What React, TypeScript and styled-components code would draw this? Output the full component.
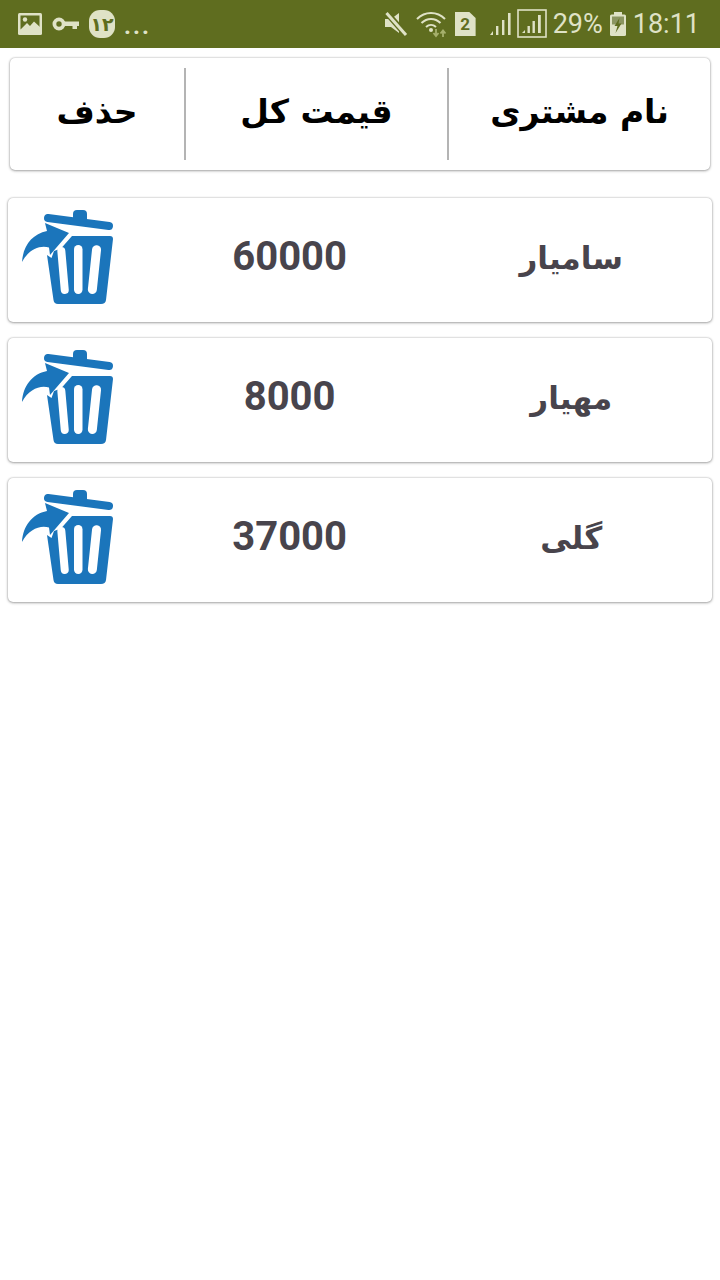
import styled, { createGlobalStyle } from "styled-components";

const GlobalStyle = createGlobalStyle`
  html, body {
    margin: 0;
    padding: 0;
    background: #fff;
  }
`;

type Order = {
  id: number;
  customer: string;
  total: string;
};

const orders: Array<Order> = [
  { id: 1, customer: "سامیار", total: "60000" },
  { id: 2, customer: "مهیار", total: "8000" },
  { id: 3, customer: "گلی", total: "37000" },
];

const StatusIconColor = "#dfe2c6";

const ImageIcon = () => (
  <svg width="26" height="24" viewBox="0 0 26 24">
    <rect x="1" y="1" width="24" height="22" rx="1.5" fill={StatusIconColor} />
    <rect x="3.5" y="3.5" width="19" height="14" fill="#5f6d1f" />
    <circle cx="8" cy="7.5" r="2.2" fill={StatusIconColor} />
    <path d="M3 18 L10 11 L13 14 L17 9.5 L23 15 L23 19 L3 19 Z" fill={StatusIconColor} />
  </svg>
);

const KeyIcon = () => (
  <svg width="28" height="16" viewBox="0 0 28 16">
    <circle cx="7" cy="8" r="4.6" fill="none" stroke={StatusIconColor} strokeWidth="3.8" />
    <path d="M12 5.5 H27 V10 H25 V13 H20.5 V10 H12 Z" fill={StatusIconColor} />
  </svg>
);

const MutedIcon = () => (
  <svg width="26" height="26" viewBox="0 0 26 26">
    <path d="M2 8 H8 L16 2 V22 L8 16 H2 Z" fill={StatusIconColor} />
    <path d="M3 1 L24 25" stroke="#5f6d1f" strokeWidth="6" />
    <path d="M3.5 2 L23 24" stroke={StatusIconColor} strokeWidth="3" />
  </svg>
);

const WifiIcon = () => (
  <svg width="34" height="28" viewBox="0 0 34 28">
    <path d="M2 9 C10 1 22 1 30 9" fill="none" stroke={StatusIconColor} strokeWidth="2" />
    <path d="M6.5 13 C12 7.5 20 7.5 25.5 13" fill="none" stroke={StatusIconColor} strokeWidth="2" />
    <path d="M11 17 C14 14.2 18 14.2 21 17" fill="none" stroke={StatusIconColor} strokeWidth="2" />
    <circle cx="16" cy="20" r="2" fill={StatusIconColor} />
    <path d="M21 19 V25 M18.5 23 L21 26 L23.5 23" fill="none" stroke="#a6b06c" strokeWidth="1.8" />
    <path d="M28 27 V21 M25.5 23.5 L28 20.5 L30.5 23.5" fill="none" stroke="#a6b06c" strokeWidth="1.8" />
  </svg>
);

const SignalBars = () => (
  <svg width="26" height="26" viewBox="0 0 26 26">
    <path d="M1 24 L4 24 L4 20 Z" fill={StatusIconColor} />
    <rect x="7" y="15" width="2.4" height="9" fill={StatusIconColor} />
    <rect x="13" y="9" width="2.4" height="15" fill={StatusIconColor} />
    <rect x="19" y="2" width="2.6" height="22" fill={StatusIconColor} />
  </svg>
);

const SignalBoxed = () => (
  <svg width="30" height="30" viewBox="0 0 30 30">
    <rect x="1" y="1" width="28" height="27" fill="none" stroke={StatusIconColor} strokeWidth="1.6" />
    <path d="M5 24 L8 24 L8 21 Z" fill={StatusIconColor} />
    <rect x="10.5" y="17" width="2.4" height="7" fill={StatusIconColor} />
    <rect x="15.5" y="12" width="2.4" height="12" fill={StatusIconColor} />
    <rect x="21" y="6" width="2.8" height="18" fill={StatusIconColor} />
  </svg>
);

const BatteryIcon = () => (
  <svg width="18" height="26" viewBox="0 0 18 26">
    <rect x="5" y="1" width="8" height="3" fill={StatusIconColor} />
    <rect x="1" y="3.5" width="16" height="21.5" rx="1.5" fill={StatusIconColor} />
    <rect x="3" y="5.5" width="12" height="8" fill="#8b9560" />
    <path d="M10.5 7 L5.5 15 L8.5 15 L6.5 22 L12.5 12.5 L9.5 12.5 Z" fill="#5f6d1f" />
  </svg>
);

const TrashIcon = () => (
  <svg width="96" height="98" viewBox="0 0 96 98">
    {/* lid */}
    <path d="M28 10 L89 18" stroke="#1b75bb" strokeWidth="8" strokeLinecap="round" fill="none" />
    <path d="M53 12 V6 Q53 2 57 2 H63 Q67 2 67 6 V14 Z" fill="#1b75bb" />
    {/* can */}
    <path
      d="M52 28 H90 Q93 28 93 31 L86 92 Q85.5 96 81 96 H38 Q34 96 33.5 92 L27 47 L31.5 50 L34 43 L41 40.5 Z"
      fill="#1b75bb"
    />
    <rect x="39" y="39" width="8" height="47" rx="4" transform="rotate(-5 43 62)" fill="#fff" />
    <rect x="54" y="37" width="8.5" height="49" rx="4.2" fill="#fff" />
    <rect x="70" y="37" width="9" height="49" rx="4.5" transform="rotate(6 74 61)" fill="#fff" />
    {/* arrow */}
    <path
      d="M25 15 L49 25 L30 47 L29 39.5 C20 37 9 41 2 54 C3 38 12 26 27 23 Z"
      fill="#1b75bb"
    />
  </svg>
);

export default function App() {
  return (
    <>
      <GlobalStyle />
      <StyledPage>
        <StatusBar>
          <NotificationGroup>
            <ImageIcon />
            <KeyIcon />
            <NotificationBadge>۱۲</NotificationBadge>
            <MoreDots>...</MoreDots>
          </NotificationGroup>
          <SystemGroup>
            <MutedIcon />
            <WifiIcon />
            <SimBadge>2</SimBadge>
            <SignalGroup>
              <SignalBars />
              <SignalBoxed />
            </SignalGroup>
            <StatusText>29%</StatusText>
            <BatteryIcon />
            <StatusText>18:11</StatusText>
          </SystemGroup>
        </StatusBar>
        <Main>
          <HeaderCard>
            <HeaderCell $width={261}>نام مشتری</HeaderCell>
            <HeaderCell $width={263} $divided>
              قیمت کل
            </HeaderCell>
            <HeaderCell $width={176} $divided>
              حذف
            </HeaderCell>
          </HeaderCard>
          <OrderList>
            {orders.map((order) => (
              <OrderRow key={order.id}>
                <CustomerName>{order.customer}</CustomerName>
                <OrderTotal>{order.total}</OrderTotal>
                <DeleteCell>
                  <DeleteButton type="button" aria-label="حذف">
                    <TrashIcon />
                  </DeleteButton>
                </DeleteCell>
              </OrderRow>
            ))}
          </OrderList>
        </Main>
      </StyledPage>
    </>
  );
}

const StyledPage = styled.div`
  width: 720px;
  height: 1280px;
  background: #fff;
  overflow: hidden;
`;
const StatusBar = styled.div`
  height: 48px;
  background: #5f6d1f;
  display: flex;
  align-items: center;
  justify-content: space-between;
  padding: 0 20px 0 17px;
  box-sizing: border-box;
`;
const NotificationGroup = styled.div`
  display: flex;
  align-items: center;
  gap: 9px;
`;
const SystemGroup = styled.div`
  display: flex;
  align-items: center;
  gap: 6px;
`;
const SignalGroup = styled.div`
  display: flex;
  align-items: center;
  gap: 2px;
`;
const NotificationBadge = styled.span`
  width: 26px;
  height: 28px;
  border-radius: 11px;
  background: ${StatusIconColor};
  color: #5f6d1f;
  font: 700 19px "DejaVu Sans", sans-serif;
  display: flex;
  align-items: center;
  justify-content: center;
`;
const MoreDots = styled.span`
  color: ${StatusIconColor};
  font: 700 24px/24px "Roboto", sans-serif;
  letter-spacing: 2px;
  padding-top: 4px;
`;
const SimBadge = styled.span`
  width: 21px;
  height: 24px;
  background: ${StatusIconColor};
  color: #5f6d1f;
  font: 700 17px/24px "Roboto", sans-serif;
  text-align: center;
  clip-path: polygon(0 0, 70% 0, 100% 25%, 100% 100%, 0 100%);
  margin-right: 7px;
`;
const StatusText = styled.span`
  color: ${StatusIconColor};
  font: 400 27px/48px "Roboto", sans-serif;
`;
const Main = styled.main`
  padding: 10px 8px 0;
  direction: rtl;
`;
const HeaderCard = styled.div`
  margin: 0 2px;
  height: 112px;
  padding: 10px 0;
  box-sizing: border-box;
  display: flex;
  background: #fff;
  border-radius: 5px;
  box-shadow: 0 0 2px rgba(0, 0, 0, 0.3), 0 1px 3px rgba(0, 0, 0, 0.3);
`;
const HeaderCell = styled.div<{ $width: number; $divided?: boolean }>`
  width: ${(props) => props.$width}px;
  box-sizing: border-box;
  display: flex;
  align-items: center;
  justify-content: center;
  padding-bottom: 6px;
  font: 700 33px "DejaVu Sans", sans-serif;
  color: #000;
  border-right: ${(props) => (props.$divided ? "2px solid #b4b4b4" : "none")};
`;
const OrderList = styled.div`
  margin-top: 28px;
  display: flex;
  flex-direction: column;
  gap: 16px;
`;
const OrderRow = styled.div`
  height: 124px;
  display: grid;
  grid-template-columns: 2fr 2fr 1fr;
  align-items: center;
  background: #fff;
  border-radius: 5px;
  box-shadow: 0 0 2px rgba(0, 0, 0, 0.3), 0 1px 3px rgba(0, 0, 0, 0.3);
`;
const CustomerName = styled.div`
  text-align: center;
  margin-bottom: 4px;
  font: 700 31px "DejaVu Sans", sans-serif;
  color: #48444c;
`;
const OrderTotal = styled.div`
  text-align: center;
  margin-bottom: 8px;
  font: 700 40px "Roboto", sans-serif;
  color: #48444c;
`;
const DeleteCell = styled.div`
  display: flex;
  justify-content: flex-end;
  padding-left: 12px;
  margin-bottom: 6px;
`;
const DeleteButton = styled.button`
  padding: 0;
  border: none;
  background: none;
  display: flex;
`;
